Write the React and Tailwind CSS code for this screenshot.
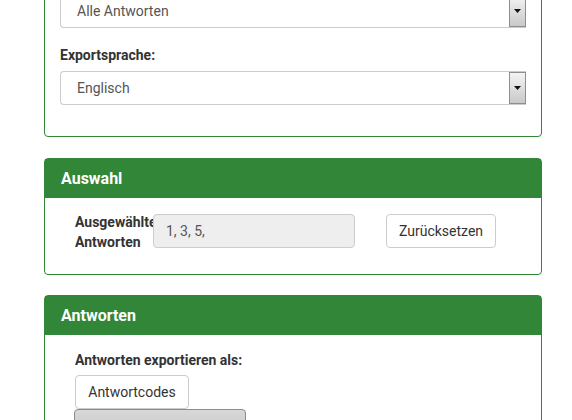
import React from "react";

const font = { fontFamily: "Roboto, 'Liberation Sans', sans-serif" };

// Windows-style select with the grey drop button on the right
function Select({ value }) {
  return (
    <div className="flex h-[34px] w-full items-stretch rounded-l-[4px] border-y border-l border-[#cccccc] bg-white">
      <div className="flex flex-1 items-center pl-4 text-[14px] text-[#555555]">{value}</div>
      <div className="flex w-[17px] items-center justify-center border border-[#8e8e8e] bg-gradient-to-b from-[#f4f4f4] to-[#c9c9c9]">
        <svg width="7" height="4" viewBox="0 0 7 4">
          <path d="M0 0h7L3.5 4z" fill="#111" />
        </svg>
      </div>
    </div>
  );
}

function Panel({ title, children, className = "" }) {
  return (
    <div className={`rounded-[4px] border border-[#328637] bg-white ${className}`}>
      {title && (
        <div className="flex h-[39px] items-center bg-[#328637] px-4 text-[16px] font-bold text-white">
          {title}
        </div>
      )}
      {children}
    </div>
  );
}

export default function App() {
  return (
    <div className="h-[420px] overflow-hidden bg-white text-[14px] leading-5 text-[#333333]" style={font}>
      <div className="ml-[44px] w-[498px]">
        {/* Export options */}
        <Panel className="-mt-[40px]">
          <div className="px-[15px] pb-[31px] pt-[33px]">
            <Select value="Alle Antworten" />
            <div className="mb-[6px] mt-[17px] font-bold">Exportsprache:</div>
            <Select value="Englisch" />
          </div>
        </Panel>

        {/* Selection */}
        <Panel title="Auswahl" className="mt-[21px]">
          <div className="flex items-start px-[30px] pb-[22px] pt-[14px]">
            <div className="w-[78px] shrink-0 font-bold">Ausgewählte Antworten</div>
            <div className="mt-[2px] flex h-[34px] w-[202px] shrink-0 items-center rounded-[4px] border border-[#cccccc] bg-[#eeeeee] px-3 text-[#555555]">
              1, 3, 5,
            </div>
            <button className="ml-[31px] mt-[2px] h-[34px] rounded-[4px] border border-[#cccccc] bg-white px-3 text-[#333333]">
              Zurücksetzen
            </button>
          </div>
        </Panel>

        {/* Answers */}
        <Panel title="Antworten" className="mt-[20px]">
          <div className="px-[30px] pt-[15px]">
            <div className="font-bold">Antworten exportieren als:</div>
            <div className="mt-[5px] flex flex-col items-start">
              <button className="h-[34px] w-[114px] rounded-[4px] border border-[#cccccc] bg-white text-[#333333]">
                Antwortcodes
              </button>
              <button
                aria-label="Vollständige Antworten"
                className="-ml-px h-[34px] w-[172px] rounded-[4px] border border-[#8c8c8c] bg-gradient-to-b from-[#d8d8d8] to-[#c4c4c4]"
              />
            </div>
          </div>
        </Panel>
      </div>
    </div>
  );
}
